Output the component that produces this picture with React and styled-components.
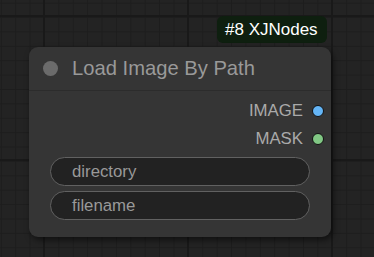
import React from "react";
import styled, { createGlobalStyle } from "styled-components";

const Global = createGlobalStyle`
  html, body {
    margin: 0;
    padding: 0;
    width: 374px;
    height: 257px;
    overflow: hidden;
    background-color: #232323;
    font-family: "Liberation Sans", Arial, sans-serif;
  }
`;

const Canvas = styled.div`
  position: relative;
  width: 374px;
  height: 257px;
  overflow: hidden;
  background-color: #232323;
  background-image:
    linear-gradient(90deg, #191919 2px, transparent 2px),
    linear-gradient(0deg, #191919 2px, transparent 2px),
    linear-gradient(90deg, #1d1d1d 1px, transparent 1px),
    linear-gradient(0deg, #1d1d1d 1px, transparent 1px);
  background-size: 144px 144px, 144px 144px, 14.4px 14.4px, 14.4px 14.4px;
  background-position: 43px 0, 0 17px, 0.8px 0, 0 3.6px;
`;

const Node = styled.div`
  position: absolute;
  left: 29px;
  top: 47px;
  width: 302px;
  display: flex;
  flex-direction: column;
  background: #353535;
  border-radius: 9px;
  box-shadow: 2px 3px 6px rgba(0, 0, 0, 0.55);
`;

const Badge = styled.div`
  position: absolute;
  left: 217px;
  top: 16px;
  height: 27px;
  padding: 0 9px 0 8px;
  display: flex;
  align-items: center;
  background: #0e1f0f;
  border-radius: 6px;
  color: #ffffff;
  font-size: 17px;
  white-space: nowrap;
`;

const TitleBar = styled.div`
  height: 43px;
  display: flex;
  align-items: center;
  gap: 14px;
  padding-left: 14px;
  border-bottom: 1px solid #2c2c2c;
`;

const StatusDot = styled.span`
  width: 15px;
  height: 15px;
  border-radius: 50%;
  background: #6b6b6b;
  flex: none;
`;

const Title = styled.span`
  font-size: 20.2px;
  color: #999999;
  white-space: nowrap;
`;

const Body = styled.div`
  display: flex;
  flex-direction: column;
  padding: 6px 0 17px;
`;

const OutputRow = styled.div`
  height: 28px;
  display: flex;
  align-items: center;
  justify-content: flex-end;
  gap: 9px;
  padding-right: 7px;
  font-size: 16.8px;
  color: #aaaaaa;
`;

const Slot = styled.span`
  width: 10px;
  height: 10px;
  border-radius: 50%;
  border: 1px solid #111;
  background: ${(p) => p.$color};
  flex: none;
`;

const Widgets = styled.div`
  display: flex;
  flex-direction: column;
  gap: 5px;
  margin: 4px 21px 0;
`;

const Field = styled.div`
  height: 27px;
  display: flex;
  align-items: center;
  padding-left: 21px;
  border: 1px solid #616161;
  border-radius: 15px;
  background: #222222;
  color: #999999;
  font-size: 16.8px;
`;

export default function App() {
  return (
    <>
      <Global />
      <Canvas>
        <Badge>#8 XJNodes</Badge>
        <Node>
          <TitleBar>
            <StatusDot />
            <Title>Load Image By Path</Title>
          </TitleBar>
          <Body>
            <OutputRow>
              IMAGE
              <Slot $color="#64b5f6" />
            </OutputRow>
            <OutputRow>
              MASK
              <Slot $color="#81c784" />
            </OutputRow>
            <Widgets>
              <Field>directory</Field>
              <Field>filename</Field>
            </Widgets>
          </Body>
        </Node>
      </Canvas>
    </>
  );
}
